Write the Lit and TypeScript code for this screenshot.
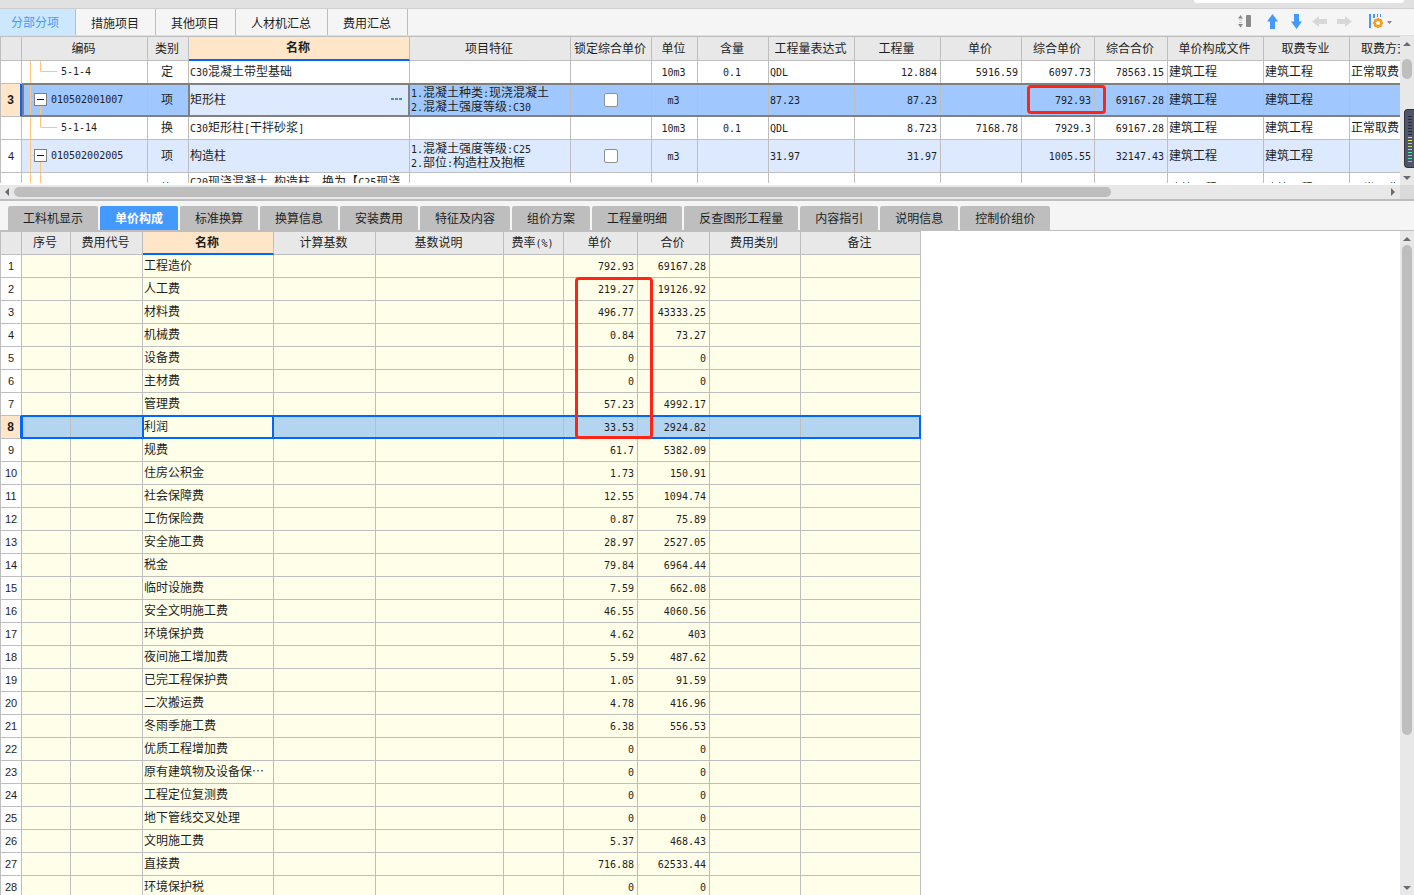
import { LitElement, html, css, svg, nothing } from "lit";
import { customElement, state } from "lit/decorators.js";
import { classMap } from "lit/directives/class-map.js";

const latin = (text: string) =>
  text
    .split(/([\x20-\x7e]+)/)
    .filter((part) => part !== "")
    .map((part) => (/^[\x20-\x7e]+$/.test(part) ? html`<span class="mono">${part}</span>` : part));

type Kind = "child" | "group" | "last";

interface Item {
  no: string;
  kind: Kind;
  code: string;
  type: string;
  name: string;
  features: string[];
  unit: string;
  content: string;
  formula: string;
  qty: string;
  price: string;
  unitPrice: string;
  total: string;
  method: string;
}

const ITEMS: Item[] = [
  { no: "", kind: "child", code: "5-1-4", type: "定", name: "C30混凝土带型基础", features: [], unit: "10m3", content: "0.1", formula: "QDL", qty: "12.884", price: "5916.59", unitPrice: "6097.73", total: "78563.15", method: "正常取费" },
  { no: "3", kind: "group", code: "010502001007", type: "项", name: "矩形柱", features: ["1.混凝土种类:现浇混凝土", "2.混凝土强度等级:C30"], unit: "m3", content: "", formula: "87.23", qty: "87.23", price: "", unitPrice: "792.93", total: "69167.28", method: "" },
  { no: "", kind: "child", code: "5-1-14", type: "换", name: "C30矩形柱[干拌砂浆]", features: [], unit: "10m3", content: "0.1", formula: "QDL", qty: "8.723", price: "7168.78", unitPrice: "7929.3", total: "69167.28", method: "正常取费" },
  { no: "4", kind: "group", code: "010502002005", type: "项", name: "构造柱", features: ["1.混凝土强度等级:C25", "2.部位:构造柱及抱框"], unit: "m3", content: "", formula: "31.97", qty: "31.97", price: "", unitPrice: "1005.55", total: "32147.43", method: "" },
  { no: "", kind: "last", code: "", type: "换", name: "C20现浇混凝土 构造柱，换为【C25现浇混凝土】", features: [], unit: "", content: "", formula: "", qty: "", price: "", unitPrice: "", total: "", method: "正常取费" },
];

const ITEM_COLS: [string, number][] = [
  ["", 22], ["编码", 126], ["类别", 41], ["名称", 221], ["项目特征", 161], ["锁定综合单价", 81], ["单位", 46], ["含量", 71],
  ["工程量表达式", 86], ["工程量", 86], ["单价", 81], ["综合单价", 73], ["综合合价", 73], ["单价构成文件", 96], ["取费专业", 86], ["取费方式", 73],
];

const FEE_COLS: [string, number][] = [
  ["", 22], ["序号", 49], ["费用代号", 72], ["名称", 131], ["计算基数", 102], ["基数说明", 128],
  ["费率(%)", 60], ["单价", 74], ["合价", 72], ["费用类别", 91], ["备注", 120],
];

const FEES: [string, string, string][] = [
  ["工程造价", "792.93", "69167.28"],
  ["人工费", "219.27", "19126.92"],
  ["材料费", "496.77", "43333.25"],
  ["机械费", "0.84", "73.27"],
  ["设备费", "0", "0"],
  ["主材费", "0", "0"],
  ["管理费", "57.23", "4992.17"],
  ["利润", "33.53", "2924.82"],
  ["规费", "61.7", "5382.09"],
  ["住房公积金", "1.73", "150.91"],
  ["社会保障费", "12.55", "1094.74"],
  ["工伤保险费", "0.87", "75.89"],
  ["安全施工费", "28.97", "2527.05"],
  ["税金", "79.84", "6964.44"],
  ["临时设施费", "7.59", "662.08"],
  ["安全文明施工费", "46.55", "4060.56"],
  ["环境保护费", "4.62", "403"],
  ["夜间施工增加费", "5.59", "487.62"],
  ["已完工程保护费", "1.05", "91.59"],
  ["二次搬运费", "4.78", "416.96"],
  ["冬雨季施工费", "6.38", "556.53"],
  ["优质工程增加费", "0", "0"],
  ["原有建筑物及设备保⋯", "0", "0"],
  ["工程定位复测费", "0", "0"],
  ["地下管线交叉处理", "0", "0"],
  ["文明施工费", "5.37", "468.43"],
  ["直接费", "716.88", "62533.44"],
  ["环境保护税", "0", "0"],
];

const TOP_TABS = ["分部分项", "措施项目", "其他项目", "人材机汇总", "费用汇总"];
const DETAIL_TABS = ["工料机显示", "单价构成", "标准换算", "换算信息", "安装费用", "特征及内容", "组价方案", "工程量明细", "反查图形工程量", "内容指引", "说明信息", "控制价组价"];

const treeLines: Record<Kind, unknown> = {
  child: svg`<path d="M8.5 0V22M18.5 0V10.5H35"/>`,
  group: svg`<path d="M8.5 0V32M8.5 15.5H12M18.5 22V32"/>`,
  last: svg`<path d="M8.5 0V32M18.5 0V15.5H35"/>`,
};

@customElement("app-root")
export class AppRoot extends LitElement {
  @state() private topTab = 0;
  @state() private detailTab = 1;

  static styles = css`
    :host {
      display: flex;
      flex-direction: column;
      height: 100vh;
      overflow: hidden;
      background: #fff;
      color: #1e1e1e;
      font: 12px/14px "Noto Sans CJK SC", "Liberation Sans", sans-serif;
    }
    button {
      font: inherit;
      color: inherit;
      border: 0;
      margin: 0;
      padding: 0;
      background: none;
    }
    svg { display: block; }
    .mono { font-family: "DejaVu Sans Mono", monospace; font-size: 10px; line-height: 10px; }

    .strip {
      flex: none;
      display: flex;
      justify-content: flex-end;
      height: 8px;
      padding-right: 10px;
      background: #e1e1e1;
      border-bottom: 1px solid #cfcfcf;
    }
    .strip-field { width: 210px; height: 3px; background: #fff; border-radius: 0 0 3px 3px; }

    .bar {
      flex: none;
      display: flex;
      justify-content: space-between;
      height: 26px;
      background: #f5f5f5;
      border-bottom: 1px solid #dedede;
    }
    .tabs { display: flex; }
    .tab { padding: 2px 16px 0 15px; border-right: 1px solid #bebebe; white-space: nowrap; }
    .tab.on { padding: 0 16px 0 11px; background: #cce8ff; color: #4499ff; }
    .tools { display: flex; align-items: center; padding-right: 20px; }

    .pane { flex: none; display: flex; height: 149px; }
    .grid { position: relative; flex: 1; min-width: 0; overflow: hidden; }
    .pane .grid { height: 147px; }

    table { table-layout: fixed; border-collapse: separate; border-spacing: 0; width: 0; border-top: 1px solid #bebebe; }
    th, td {
      box-sizing: border-box;
      padding: 0 3px 2px 1px;
      border: 0 solid #bebebe;
      border-right-width: 1px;
      border-bottom-width: 1px;
      white-space: nowrap;
      overflow: hidden;
      font-weight: normal;
      text-align: left;
      vertical-align: middle;
    }
    th:first-child { border-left-width: 1px; text-align: center; padding: 0; }
    thead th { text-align: center; background: #e8e8e8; height: 24px; }
    .fees thead th { height: 23px; }
    thead th.key { background: #ffe6c8; font-weight: bold; border-bottom: 2px solid #0066ff; }
    tbody th { font-family: "Liberation Sans", sans-serif; font-size: 11px; background: #fff; }
    tr { position: relative; }
    td.c { text-align: center; }
    td.r { text-align: right; }
    td.check { padding: 0; }
    .short { height: 23px; }
    .tall { height: 33px; }
    .group td { background: #dce9fe; }
    .cur th { background: #ffe6c8; font-weight: bold; font-size: 12px; border-right: 2px solid #0066ff; }
    .items .cur td { background: #a0c8ff; }
    .items .cur td.name { background: #dce9fe; position: relative; overflow: visible; }
    .cur::after, .cur td.name::after { content: ""; position: absolute; border: 2px solid #808080; pointer-events: none; }
    .items .cur::after { inset: -1px 0 0 22px; }
    .cur td.name::after { inset: -1px; }
    td.wrap { white-space: normal; }
    td.tree { padding: 0; }
    .code { display: flex; align-items: center; }
    .branch { display: grid; width: 29px; }
    .child .branch { width: 39px; }
    .branch > * { grid-area: 1 / 1; }
    .branch path { fill: none; stroke: #ffc67b; }
    .toggle { width: 13px; height: 13px; margin: 9px 0 0 12px; }
    .edit { display: flex; justify-content: space-between; align-items: center; padding-right: 4px; }
    input[type="checkbox"] { appearance: none; display: block; box-sizing: border-box; width: 14px; height: 14px; margin: 0 auto; border: 1px solid #909090; border-radius: 2px; background: #fff; }

    .vbar { flex: none; display: flex; flex-direction: column; align-items: center; width: 14px; background: #e8e8e8; }
    .vbar .up { margin: 5px 0 4px; }
    .vbar .down { margin: auto 0 4px; }
    .thumb { background: #bebebe; border-radius: 5px; }
    .pane .thumb { width: 10px; height: 20px; margin-top: 9px; }
    .detail .thumb { width: 10px; height: 490px; }
    .hbar { flex: none; display: flex; align-items: center; height: 14px; background: linear-gradient(to left, #dadada 14px, #e8e8e8 14px); border-bottom: 2px solid #bebebe; }
    .hbar .left { margin: 0 5px; }
    .hbar .right { margin: 0 19px 0 auto; }
    .hbar .thumb { width: 77.6%; height: 10px; }

    .detail-tabs { flex: none; display: flex; align-items: flex-end; gap: 2px; height: 29px; padding-left: 8px; background: #f5f5f5; border-bottom: 1px solid #bebebe; }
    .detail-tab { height: 24px; padding: 0 15px; background: #bebebe; border-radius: 2px 2px 0 0; white-space: nowrap; }
    .detail-tab.on { background: #4499ff; color: #fff; font-weight: bold; }
    .detail { flex: 1; min-height: 0; display: flex; }
    .fees td { background: #ffffe9; }
    .fees .cur td { background: #b3d5f0; }
    .fees .cur td.name { background: #ffffe9; position: relative; overflow: visible; }
    .fees .cur::after { inset: -1px 0 0 21px; border-color: #0066ff; }
    .fees .cur td.name::after { border-color: #0066ff; }

    .mark { position: absolute; box-sizing: border-box; border: 3px solid #ff2414; border-radius: 4px; pointer-events: none; }
    .mark.unit { left: 1027px; top: 49px; width: 79px; height: 29px; }
    .mark.split { left: 575px; top: 46px; width: 78px; height: 162px; }

    .meter { position: absolute; right: 0; top: 109px; box-sizing: border-box; width: 10px; height: 59px; padding: 6px 2px 5px 3px; background: #50566a; border: 1px solid #30343f; border-right: 0; border-radius: 4px 0 0 4px; }
  `;

  private arrow(dir: string) {
    const shapes: Record<string, string> = {
      up: "M0 5L4 1L8 5Z", down: "M0 0H8L4 4Z", left: "M4 0V8L0 4Z", right: "M0 0V8L4 4Z",
    };
    const side = dir === "left" || dir === "right";
    return html`<svg class=${dir} width=${side ? 4 : 8} height=${side ? 8 : 5} aria-hidden="true"><path d=${shapes[dir]} fill="#6a6a74" /></svg>`;
  }

  private head(cols: [string, number][]) {
    return html`
      <colgroup>${cols.map(([, w]) => html`<col style="width:${w}px" />`)}</colgroup>
      <thead><tr>${cols.map(([t]) => html`<th scope="col" class=${t === "名称" ? "key" : ""}>${latin(t)}</th>`)}</tr></thead>`;
  }

  private item(it: Item) {
    const cur = it.no === "3";
    const h = it.kind === "child" ? 22 : 32;
    const rowClass = classMap({ short: it.kind === "child", tall: it.kind !== "child", group: it.kind === "group", child: it.kind === "child", cur });
    return html`<tr class=${rowClass}>
      <th scope="row">${it.no}</th>
      <td class="tree"><div class="code"><div class="branch">
        <svg width="36" height=${h} aria-hidden="true">${treeLines[it.kind]}</svg>
        ${it.kind === "group"
          ? html`<button class="toggle" aria-label="折叠"><svg width="13" height="13"><rect x=".5" y=".5" width="12" height="12" fill="#fff" stroke="#808080" /><path d="M3 6.5H10" style="stroke:#111" /></svg></button>`
          : nothing}
      </div>${latin(it.code)}</div></td>
      <td class="c">${it.type}</td>
      <td class="name ${it.kind === "last" ? "wrap" : ""}">${cur
        ? html`<div class="edit">${it.name}<button aria-label="编辑"><svg width="11" height="2"><path d="M0 0H3V2H0ZM4 0H7V2H4ZM8 0H11V2H8Z" fill="#3a8fd8" /></svg></button></div>`
        : latin(it.name)}</td>
      <td>${it.features.map((f) => html`<div>${latin(f)}</div>`)}</td>
      <td class="check">${it.kind === "group" ? html`<input type="checkbox" aria-label="锁定综合单价" />` : nothing}</td>
      <td class="c">${latin(it.unit)}</td>
      <td class="c">${latin(it.content)}</td>
      <td>${latin(it.formula)}</td>
      <td class="r">${latin(it.qty)}</td>
      <td class="r">${latin(it.price)}</td>
      <td class="r">${latin(it.unitPrice)}</td>
      <td class="r">${latin(it.total)}</td>
      <td>建筑工程</td>
      <td>建筑工程</td>
      <td>${it.method}</td>
    </tr>`;
  }

  private fee([name, price, total]: [string, string, string], i: number) {
    return html`<tr class="short ${i === 7 ? "cur" : ""}">
      <th scope="row">${i + 1}</th><td></td><td></td>
      <td class="name">${name}</td><td></td><td></td><td></td>
      <td class="r">${latin(price)}</td><td class="r">${latin(total)}</td><td></td><td></td>
    </tr>`;
  }

  render() {
    return html`
      <div class="strip"><div class="strip-field"></div></div>
      <div class="bar">
        <nav class="tabs">${TOP_TABS.map((t, i) => html`<button class="tab ${i === this.topTab ? "on" : ""}" @click=${() => (this.topTab = i)}>${t}</button>`)}</nav>
        <div class="tools">
          <button aria-label="行高"><svg width="28" height="26"><path d="M1 9.500L3.500 6L6 9.500ZM1 15H6L3.500 18.500Z" fill="#8a8a8a" /><path d="M2 11H5M2 13.500H5" stroke="#c4c4c4" /><rect x="9" y="6" width="5" height="12" rx="1" fill="#8a8a8a" /></svg></button>
          <button aria-label="上移"><svg width="24" height="26"><path d="M7.500 5L13 12.500H10V20H5V12.500H2Z" fill="#4499ff" /></svg></button>
          <button aria-label="下移"><svg width="23" height="26"><path d="M5 5H10V12.500H13L7.500 20L2 12.500H5Z" fill="#4499ff" /></svg></button>
          <button aria-label="左移"><svg width="25" height="26"><path d="M0 12.500L7 7V10H15V15H7V18Z" fill="#d8d8d8" /></svg></button>
          <button aria-label="右移"><svg width="32" height="26"><path d="M15 12.500L8 7V10H0V15H8V18Z" fill="#d8d8d8" /></svg></button>
          <button aria-label="设置"><svg width="25" height="26">
            <path d="M0 5H2V19H0ZM4 5H6V9H4ZM8 5H9V8H8ZM11 5H12V8H11Z" fill="#4499ff" />
            <g fill="#ff9a1e"><rect x="5" y="10" width="8" height="8" rx="1" /><rect x="5" y="10" width="8" height="8" rx="1" transform="rotate(45 9 14)" /></g>
            <circle cx="9" cy="14" r="2" fill="#fff" />
            <path d="M18 12H23L20.500 15Z" fill="#888" />
          </svg></button>
        </div>
      </div>
      <div class="pane">
        <div class="grid">
          <table class="items">${this.head(ITEM_COLS)}<tbody>${ITEMS.map((it) => this.item(it))}</tbody></table>
          <div class="mark unit"></div>
        </div>
        <div class="vbar">${this.arrow("up")}<div class="thumb"></div>${this.arrow("down")}</div>
      </div>
      <div class="hbar">${this.arrow("left")}<div class="thumb"></div>${this.arrow("right")}</div>
      <nav class="detail-tabs">${DETAIL_TABS.map((t, i) => html`<button class="detail-tab ${i === this.detailTab ? "on" : ""}" @click=${() => (this.detailTab = i)}>${t}</button>`)}</nav>
      <div class="detail">
        <div class="grid">
          <table class="fees">${this.head(FEE_COLS)}<tbody>${FEES.map((f, i) => this.fee(f, i))}</tbody></table>
          <div class="mark split"></div>
        </div>
        <div class="vbar">${this.arrow("up")}<div class="thumb"></div>${this.arrow("down")}</div>
      </div>
      <svg class="meter" viewBox="0 0 4 46" aria-hidden="true">
        ${Array.from({ length: 16 }, (_, i) => svg`<rect x="0" y=${i * 3} width="4" height="1" fill=${i < 7 ? "#2b2e38" : i < 9 ? "#e8e04a" : i < 12 ? "#a5e85c" : "#4fe3b0"} />`)}
      </svg>`;
  }
}
